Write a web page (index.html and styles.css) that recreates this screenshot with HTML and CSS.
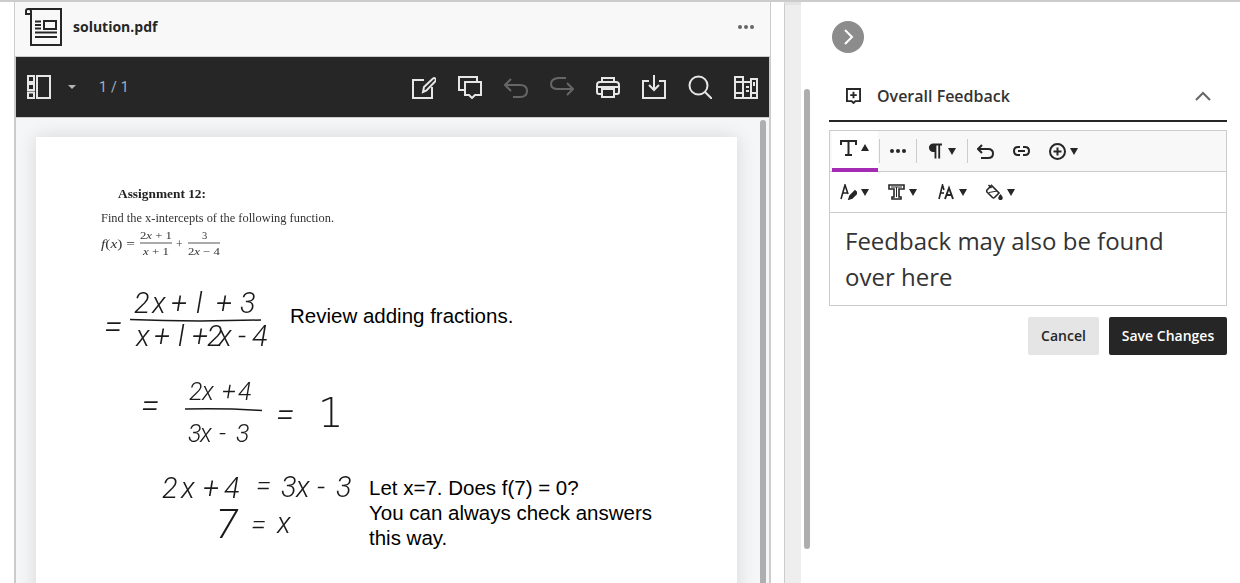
FILE: index.html
```html
<!DOCTYPE html>
<html lang="en">
<head>
<meta charset="utf-8">
<title>solution.pdf</title>
<link rel="stylesheet" href="styles.css">
</head>
<body>
<div class="app">
  <section class="viewer">
    <header class="file-bar">
      <svg class="file-icon" viewBox="0 0 38 38" fill="none" stroke="#262626" stroke-width="2">
        <path d="M6 6V37H36V1H3Q1 1 1 3V6H6V3Q6 1 3 1"/>
        <path d="M10 13.500h6M10 17h6M10 20.500h6M10 24.500h22M10 29h22" />
        <rect x="19" y="13" width="12" height="8"/>
      </svg>
      <span class="file-name">solution.pdf</span>
      <span class="more-dots"><i></i><i></i><i></i></span>
    </header>
    <div class="doc">
      <div class="pdf-toolbar">
        <svg class="tb-icon" viewBox="0 0 24 24" fill="none" stroke="#e6e6e6" stroke-width="2">
          <path d="M1 1h6v6H1zM1 9h6v6H1zM1 17.500h6v5.500H1zM10 1h13v22H10z"/>
        </svg>
        <span class="caret"></span>
        <span class="page-no">1 / 1</span>
        <div class="tb-right">
          <svg class="tb-icon" viewBox="0 0 24 24" fill="none" stroke="#e6e6e6" stroke-width="2">
            <path d="M12 5H1V23H20V12"/><path d="M11 17l1-5 9-8.500q1.500-1 2.500.5t-.5 2.500l-8.500 9z"/>
          </svg>
          <svg class="tb-icon" viewBox="0 0 24 24" fill="none" stroke="#e6e6e6" stroke-width="2">
            <path d="M7 15H1V2H19V6"/><path d="M7 7H23V20H17L14 23 11 20H7z"/>
          </svg>
          <svg class="tb-icon" viewBox="0 0 24 24" fill="none" stroke="#666" stroke-width="2">
            <path d="M7 4L1 10l6 6M1 10H16q7 0 7 6t-7 6H9"/>
          </svg>
          <svg class="tb-icon" viewBox="0 0 24 24" fill="none" stroke="#666" stroke-width="2">
            <path d="M17 8l6 6-6 6M23 14H8Q1 14 1 9t7-6H16"/>
          </svg>
          <svg class="tb-icon" viewBox="0 0 24 24" fill="none" stroke="#e6e6e6" stroke-width="2">
            <path d="M6 7V3H18V7M6 19H3Q1 19 1 17V10Q1 7 4 7H20Q23 7 23 10V17Q23 19 21 19H18"/>
            <path d="M6 14H18V22H6zM1 12H23"/>
          </svg>
          <svg class="tb-icon" viewBox="0 0 24 24" fill="none" stroke="#e6e6e6" stroke-width="2">
            <path d="M7 6H1V23H23V6H17M12 0V15M7 10l5 5 5-5"/>
          </svg>
          <svg class="tb-icon" viewBox="0 0 24 24" fill="none" stroke="#e6e6e6" stroke-width="2">
            <circle cx="10.500" cy="10.500" r="9"/><path d="M17 17l7 7"/>
          </svg>
          <svg class="tb-icon" viewBox="0 0 24 24" fill="none" stroke="#e6e6e6" stroke-width="2">
            <path d="M1 2H9V23H1zM9 7H17V23H9zM17 4H23V23H17zM1 7H9M1 18H9M17 18H23M12 12h3M12 16h3"/>
            <path d="M20 7v4" stroke-width="2"/>
          </svg>
        </div>
      </div>
      <div class="pdf-scroll">
        <div class="pdf-page">
          <svg class="pdf-art" viewBox="36 137 701 446" width="701" height="446">
            <g class="latex">
              <text class="latex-b" x="118" y="198" textLength="88" lengthAdjust="spacingAndGlyphs">Assignment 12:</text>
              <text x="101" y="222" textLength="233" lengthAdjust="spacingAndGlyphs">Find the x-intercepts of the following function.</text>
              <text x="101" y="248" textLength="34" lengthAdjust="spacingAndGlyphs"><tspan class="it">f</tspan>(<tspan class="it">x</tspan>) =</text>
              <text class="small" x="140" y="239" textLength="32" lengthAdjust="spacingAndGlyphs">2<tspan class="it">x</tspan> + 1</text>
              <text class="small" x="143" y="255" textLength="26" lengthAdjust="spacingAndGlyphs"><tspan class="it">x</tspan> + 1</text>
              <text x="176" y="248">+</text>
              <text class="small" x="202" y="239">3</text>
              <text class="small" x="188" y="255" textLength="32" lengthAdjust="spacingAndGlyphs">2<tspan class="it">x</tspan> − 4</text>
              <path class="latex-bar" d="M140 243H172M188 243H220"/>
            </g>
            <g class="hand">
              <text x="134 152 171 196 216 240" y="313">2x+l+3</text>
              <path d="M130 319.500Q190 322 261 320"/>
              <text class="eq-lg" x="104" y="338">=</text>
              <text x="136 154 178 192 207 218 238 252" y="346">x+l+2x-4</text>

              <text class="eq-lg" x="141" y="417">=</text>
              <text class="hand-md" x="189 202 222 238" y="400">2x+4</text>
              <path d="M185 409Q225 408 262 410.500"/>
              <text class="hand-md" x="188 200 219 236" y="442">3x-3</text>
              <text class="eq-lg" x="276" y="426">=</text>
              <text class="one" x="318" y="427">1</text>

              <text x="162 181 203 224" y="498">2x+4</text>
              <text class="eq-sm" x="256" y="495">=</text>
              <text x="281 296 317 336" y="497">3x-3</text>
              <text class="hand-lg" x="216" y="538">7</text>
              <text class="eq-sm" x="251" y="534">=</text>
              <text x="277" y="533">x</text>
            </g>
            <g class="typed">
              <text x="290" y="323">Review adding fractions.</text>
              <text x="369" y="495">Let x=7. Does f(7) = 0?</text>
              <text x="369" y="520">You can always check answers</text>
              <text x="369" y="545">this way.</text>
            </g>
          </svg>
        </div>
        <div class="inner-thumb"></div>
      </div>
    </div>
  </section>

  <div class="divider"></div>
  <div class="outer-thumb"></div>

  <aside class="panel">
    <button class="round-btn" type="button" aria-label="Collapse">
      <svg viewBox="0 0 32 32" fill="none" stroke="#fff" stroke-width="2"><path d="M13 9l7 7-7 7"/></svg>
    </button>
    <div class="fb-head">
      <svg class="fb-icon" viewBox="0 0 16 17" fill="none" stroke="#262626" stroke-width="2">
        <path d="M1 1H15V14H10L8 16 6 14H1z"/><path d="M8 4V11M4.500 7.500H11.500"/>
      </svg>
      <span class="fb-title">Overall Feedback</span>
      <svg class="chev" viewBox="0 0 16 10" fill="none" stroke="#666" stroke-width="2"><path d="M1 9l7-7 7 7"/></svg>
    </div>
    <div class="editor">
      <div class="ed-row ed-row-top">
        <div class="ed-tool active">
          <svg class="ic-t" viewBox="0 0 17 16" fill="none" stroke="#262626" stroke-width="2"><path d="M1 5V1H16V5M8.500 1V15M5 15H12"/></svg>
          <span class="tri up"></span>
        </div>
        <span class="sep"></span>
        <span class="dots-sm"><i></i><i></i><i></i></span>
        <span class="sep s2"></span>
        <svg class="ic-p" viewBox="0 0 15 16" fill="#262626"><path d="M5.500 0H15V2H13V16H11V2H9V16H7V9H5.500A4.500 4.500 0 0 1 5.500 0z"/></svg>
        <span class="tri"></span>
        <span class="sep s3"></span>
        <svg class="ic-undo" viewBox="0 0 17 15" fill="none" stroke="#262626" stroke-width="2"><path d="M5 1L1 5l4 4M1 5H11Q16 5 16 9.500T11 14H4"/></svg>
        <svg class="ic-link" viewBox="0 0 17 10" fill="none" stroke="#262626" stroke-width="2"><path d="M7 1H5Q1 1 1 5t4 4h2M10 1h2q4 0 4 4t-4 4h-2M5 5h7"/></svg>
        <svg class="ic-add" viewBox="0 0 17 17" fill="none" stroke="#262626" stroke-width="2"><circle cx="8.500" cy="8.500" r="7.500"/><path d="M8.500 4.500v8M4.500 8.500h8"/></svg>
        <span class="tri"></span>
      </div>
      <div class="ed-row ed-row-2">
        <svg class="ic-17" viewBox="0 0 17 16" fill="none" stroke="#262626" stroke-width="1.600"><path d="M1 15L5 1l3 9M3 9H8"/><path d="M9 15l1-3 5-5 2 2-5 5z" fill="#262626"/></svg>
        <span class="tri"></span>
        <svg class="ic-17 g2" viewBox="0 0 17 16" fill="none" stroke="#262626" stroke-width="1.600"><path d="M1 1H16V5H11V13H13V15H4V13H6V5H1z"/><path d="M3 3H14M8.500 3V13" stroke-width="1"/></svg>
        <span class="tri"></span>
        <svg class="ic-17 g3" viewBox="0 0 17 16" fill="none" stroke="#262626" stroke-width="1.600"><path d="M1 15L4.500 1 6 6"/><path d="M2 9H6"/><path d="M7 15L11 4l4 11M8.500 11H13.500" stroke-width="1.900"/></svg>
        <span class="tri"></span>
        <svg class="ic-17 g4" viewBox="0 0 17 16" fill="none" stroke="#262626" stroke-width="1.600"><path d="M1 6L5.500 1.500 13 9 8.500 13.500Q7.500 14.500 6.500 13.500L1 8Q0 7 1 6zM2.500 1l3 3"/><path d="M3 8.500L11 7" stroke-width="1"/><path d="M14.500 10q2.300 2.500 2.300 3.800a2.300 2.300 0 0 1-4.600 0q0-1.300 2.300-3.800z" fill="#262626" stroke="none"/></svg>
        <span class="tri"></span>
      </div>
      <div class="ed-body">Feedback may also be found over here</div>
    </div>
    <div class="actions">
      <button class="btn btn-light" type="button">Cancel</button>
      <button class="btn btn-dark" type="button">Save Changes</button>
    </div>
  </aside>
</div>
</body>
</html>
```

FILE: styles.css
```css
* { box-sizing: border-box; }
html, body { margin: 0; padding: 0; height: 100%; background: #fff; overflow: hidden; }
body { font-family: "Open Sans", "Liberation Sans", sans-serif; color: #262626; }

.app {
  position: relative;
  display: flex;
  height: 583px;
  border-top: 2px solid #ccc;
  overflow: hidden;
}

/* left viewer */
.viewer {
  display: flex;
  flex-direction: column;
  width: 757px;
  margin-left: 14px;
  border-left: 1px solid #ccc;
  border-right: 1px solid #ccc;
  flex: none;
}
.file-bar {
  display: flex;
  align-items: center;
  flex: none;
  height: 55px;
  padding: 0 16px 4px 10px;
  background: #f8f8f8;
  border-bottom: 1px solid #ccc;
}
.file-icon { width: 38px; height: 38px; flex: none; }
.file-name { margin: 0 0 2px 10px; font-size: 14px; font-weight: 700; }
.more-dots { display: flex; gap: 2px; margin-left: auto; }
.more-dots i { width: 4px; height: 4px; border-radius: 50%; background: #666; }

.doc {
  display: flex;
  flex-direction: column;
  flex: 1;
  min-height: 0;
  border-left: 1px solid #ccc;
  border-right: 1px solid #ccc;
  background: #f5f6f8;
}
.pdf-toolbar {
  display: flex;
  align-items: center;
  flex: none;
  height: 61px;
  padding: 0 11px 1px 11px;
  background: #262626;
  border-bottom: 1px solid #ccc;
}
.tb-icon { width: 24px; height: 24px; flex: none; }
.caret {
  width: 0;
  height: 0;
  margin-left: 17px;
  border-left: 4.500px solid transparent;
  border-right: 4.500px solid transparent;
  border-top: 4.500px solid #b5b5b5;
}
.page-no { margin-left: 23px; font: 14px "Roboto", sans-serif; letter-spacing: .3px; color: #a3b1c4; }
.tb-right { display: flex; gap: 22px; margin-left: auto; }

.pdf-scroll {
  position: relative;
  flex: 1;
  min-height: 0;
  padding: 19px 32px 0 20px;
  overflow: hidden;
}
.pdf-page {
  width: 701px;
  height: 600px;
  background: #fff;
  box-shadow: 0 0 18px rgba(0, 0, 0, .13);
}
.pdf-art { display: block; }
.inner-thumb {
  position: absolute;
  top: 2px;
  bottom: -10px;
  right: 3px;
  width: 6px;
  border-radius: 3px;
  background: #aeaeae;
}

.latex { filter: blur(.25px); }
.latex text { font: 11.500px "Liberation Serif", serif; fill: #333; }
.latex .latex-b { font-weight: 700; font-size: 12px; fill: #222; }
.latex .small { font-size: 10.500px; }
.latex .it { font-style: italic; }
.latex-bar { stroke: #555; stroke-width: 1; fill: none; }

.hand { filter: blur(.2px); }
.hand text { font: italic 300 29px "Roboto", sans-serif; fill: #1a1a1a; }
.hand .hand-md { font-size: 25px; }
.hand .hand-lg { font-size: 40px; }
.hand .eq-lg { font-size: 34px; }
.hand .eq-sm { font-size: 28px; }
.hand .one { font: 200 40px "DejaVu Sans", sans-serif; }
.hand path { fill: none; stroke: #1a1a1a; stroke-width: 1.500; }
.typed text { font: 20.500px "Liberation Sans", sans-serif; fill: #000; }

/* gutter */
.divider {
  flex: none;
  width: 17px;
  margin-left: 13px;
  background: #eee;
  border-left: 1px solid #ccc;
  border-top: 3px solid #e4e4e4;
}
.outer-thumb {
  position: absolute;
  left: 804px;
  top: 87px;
  width: 6px;
  height: 460px;
  border-radius: 3px;
  background: #aeaeae;
}

/* right panel */
.panel { flex: 1; min-width: 0; padding: 19px 13px 0 28px; }
.round-btn {
  display: block;
  width: 32px;
  height: 32px;
  margin-left: 3px;
  padding: 0;
  border: 0;
  border-radius: 50%;
  background: #8c8c8c;
}
.round-btn svg { display: block; width: 32px; height: 32px; }
.fb-head {
  display: flex;
  align-items: center;
  height: 50px;
  margin-top: 19px;
  padding: 0 16px 0 17px;
  border-bottom: 2px solid #262626;
}
.fb-icon { width: 15px; height: 16px; flex: none; }
.fb-title { margin-left: 16px; font-size: 16px; font-weight: 600; color: #333; }
.chev { width: 16px; height: 10px; margin-left: auto; }

.editor { margin-top: 8px; border: 1px solid #ccc; }
.ed-row { display: flex; align-items: center; height: 41px; border-bottom: 1px solid #ccc; }
.ed-row-top { background: #f8f8f8; padding-left: 2px; }
.ed-row-2 { padding-left: 10px; }
.ed-tool {
  display: flex;
  align-items: center;
  align-self: stretch;
  width: 46px;
  padding: 0 0 4px 8px;
  background: #fff;
  border-bottom: 4px solid #a52bb5;
  margin-bottom: -1px;
}
.ed-tool svg { width: 17px; height: 16px; }
.tri {
  flex: none;
  width: 0;
  height: 0;
  margin-left: 4px;
  border-left: 4px solid transparent;
  border-right: 4px solid transparent;
  border-top: 7px solid #262626;
}
.tri.up { border-top: 0; border-bottom: 7px solid #262626; }
.sep { flex: none; width: 1px; height: 24px; margin-left: 1px; background: #ccc; }
.sep.s2 { margin-left: 10px; }
.sep.s3 { margin-left: 11px; }
.dots-sm { display: flex; gap: 2px; margin-left: 10px; }
.dots-sm i { width: 4px; height: 4px; border-radius: 50%; background: #262626; }
.ic-p { width: 14px; height: 16px; margin-left: 11px; flex: none; }
.ic-p + .tri { margin-left: 6px; }
.ic-undo { width: 17px; height: 15px; margin-left: 9px; flex: none; }
.ic-link { width: 17px; height: 10px; margin-left: 19px; flex: none; }
.ic-add { width: 17px; height: 17px; margin-left: 19px; flex: none; }
.ic-17 { width: 17px; height: 16px; flex: none; }
.g2 { margin-left: 19px; }
.g3 { margin-left: 21px; }
.g4 { margin-left: 19px; }

.ed-body { padding: 10px 15px; font-size: 24px; line-height: 36px; color: #333; }

.actions { display: flex; justify-content: flex-end; gap: 10px; margin-top: 11px; }
.btn {
  height: 38px;
  padding: 0 0 2px;
  border: 0;
  border-radius: 2px;
  font: 600 14px "Open Sans", sans-serif;
}
.btn-light { width: 71px; background: #e5e5e5; color: #262626; }
.btn-dark { width: 118px; background: #262626; color: #fff; }
```
